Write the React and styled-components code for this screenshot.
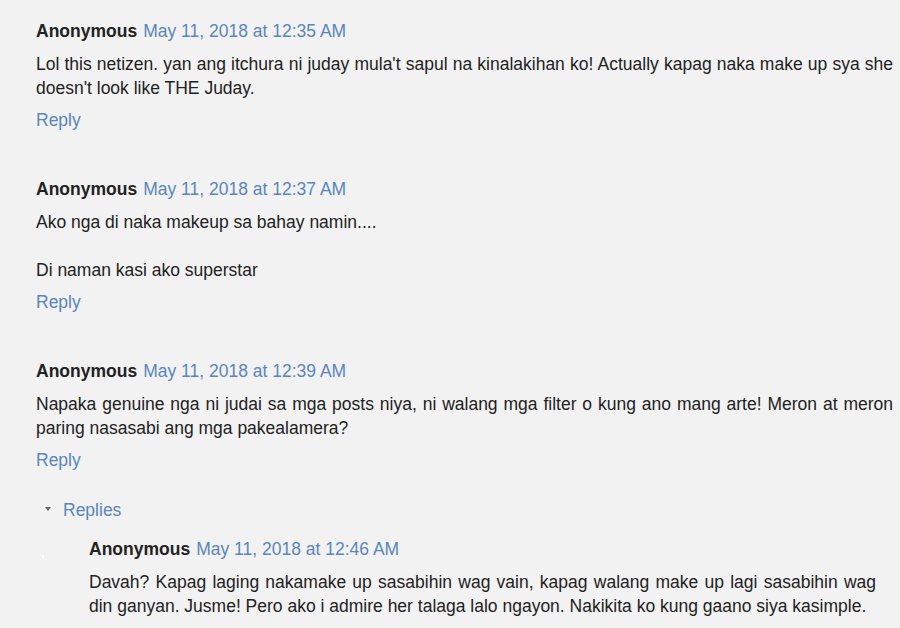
import React from "react";
import styled, { createGlobalStyle } from "styled-components";

const GlobalStyle = createGlobalStyle`
  html, body {
    margin: 0;
    padding: 0;
    overflow: hidden;
    background-color: #f2f2f2;
  }
  body {
    font-family: "Liberation Sans", Arial, sans-serif;
    font-size: 17.5px;
    color: #222;
  }
`;

const Thread = styled.div`
  padding: 19px 7px 0 36px;
`;

const CommentBox = styled.div`
  padding-bottom: ${(p) => (p.last ? "0" : "45px")};
`;

const Header = styled.div`
  height: 24px;
  line-height: 24px;
  margin-bottom: 9px;
  white-space: nowrap;
`;

const Author = styled.span`
  font-weight: bold;
  color: #222;
  margin-right: 6px;
`;

const DateLink = styled.a`
  color: #5a86bf;
  text-decoration: none;
`;

const Body = styled.p`
  margin: 0;
  line-height: 24px;
  text-align: justify;
`;

const ReplyLink = styled.a`
  display: block;
  margin-top: 8px;
  line-height: 24px;
  color: #5a86bf;
  text-decoration: none;
`;

const RepliesBlock = styled.div`
  margin-top: 26px;
`;

const Toggle = styled.div`
  display: flex;
  align-items: center;
  gap: 12px;
  padding-left: 9px;
  line-height: 24px;
  color: #5a86bf;
`;

const Caret = styled.span`
  width: 0;
  height: 0;
  border-left: 3.5px solid transparent;
  border-right: 3.5px solid transparent;
  border-top: 4px solid #666;
  margin-top: -3px;
`;

const Nested = styled.div`
  position: relative;
  margin-top: 15px;
  padding-left: 53px;
  padding-right: 17px;
`;

const Dot = styled.span`
  position: absolute;
  left: 6px;
  top: 18px;
  width: 2px;
  height: 3px;
  background: #fff;
`;

const comments = [
  {
    date: "May 11, 2018 at 12:35 AM",
    body: ["Lol this netizen. yan ang itchura ni juday mula't sapul na kinalakihan ko! Actually kapag naka make up sya she doesn't look like THE Juday."],
  },
  {
    date: "May 11, 2018 at 12:37 AM",
    body: ["Ako nga di naka makeup sa bahay namin....", "", "Di naman kasi ako superstar"],
  },
  {
    date: "May 11, 2018 at 12:39 AM",
    body: ["Napaka genuine nga ni judai sa mga posts niya, ni walang mga filter o kung ano mang arte! Meron at meron paring nasasabi ang mga pakealamera?"],
    replies: [
      {
        date: "May 11, 2018 at 12:46 AM",
        body: ["Davah? Kapag laging nakamake up sasabihin wag vain, kapag walang make up lagi sasabihin wag din ganyan. Jusme! Pero ako i admire her talaga lalo ngayon. Nakikita ko kung gaano siya kasimple."],
      },
    ],
  },
];

function Comment({ c, last, nested }) {
  return (
    <CommentBox last={last}>
      <Header>
        <Author>Anonymous</Author>
        <DateLink href="#">{c.date}</DateLink>
      </Header>
      <Body>
        {c.body.map((line, i) => (
          <React.Fragment key={i}>
            {i > 0 && <br />}
            {line}
          </React.Fragment>
        ))}
      </Body>
      {!nested && <ReplyLink href="#">Reply</ReplyLink>}
      {c.replies && (
        <RepliesBlock>
          <Toggle>
            <Caret />
            Replies
          </Toggle>
          <Nested>
            <Dot />
            {c.replies.map((r, i) => (
              <Comment key={i} c={r} nested last />
            ))}
          </Nested>
        </RepliesBlock>
      )}
    </CommentBox>
  );
}

export default function App() {
  return (
    <>
      <GlobalStyle />
      <Thread>
        {comments.map((c, i) => (
          <Comment key={i} c={c} last={i === comments.length - 1} />
        ))}
      </Thread>
    </>
  );
}
